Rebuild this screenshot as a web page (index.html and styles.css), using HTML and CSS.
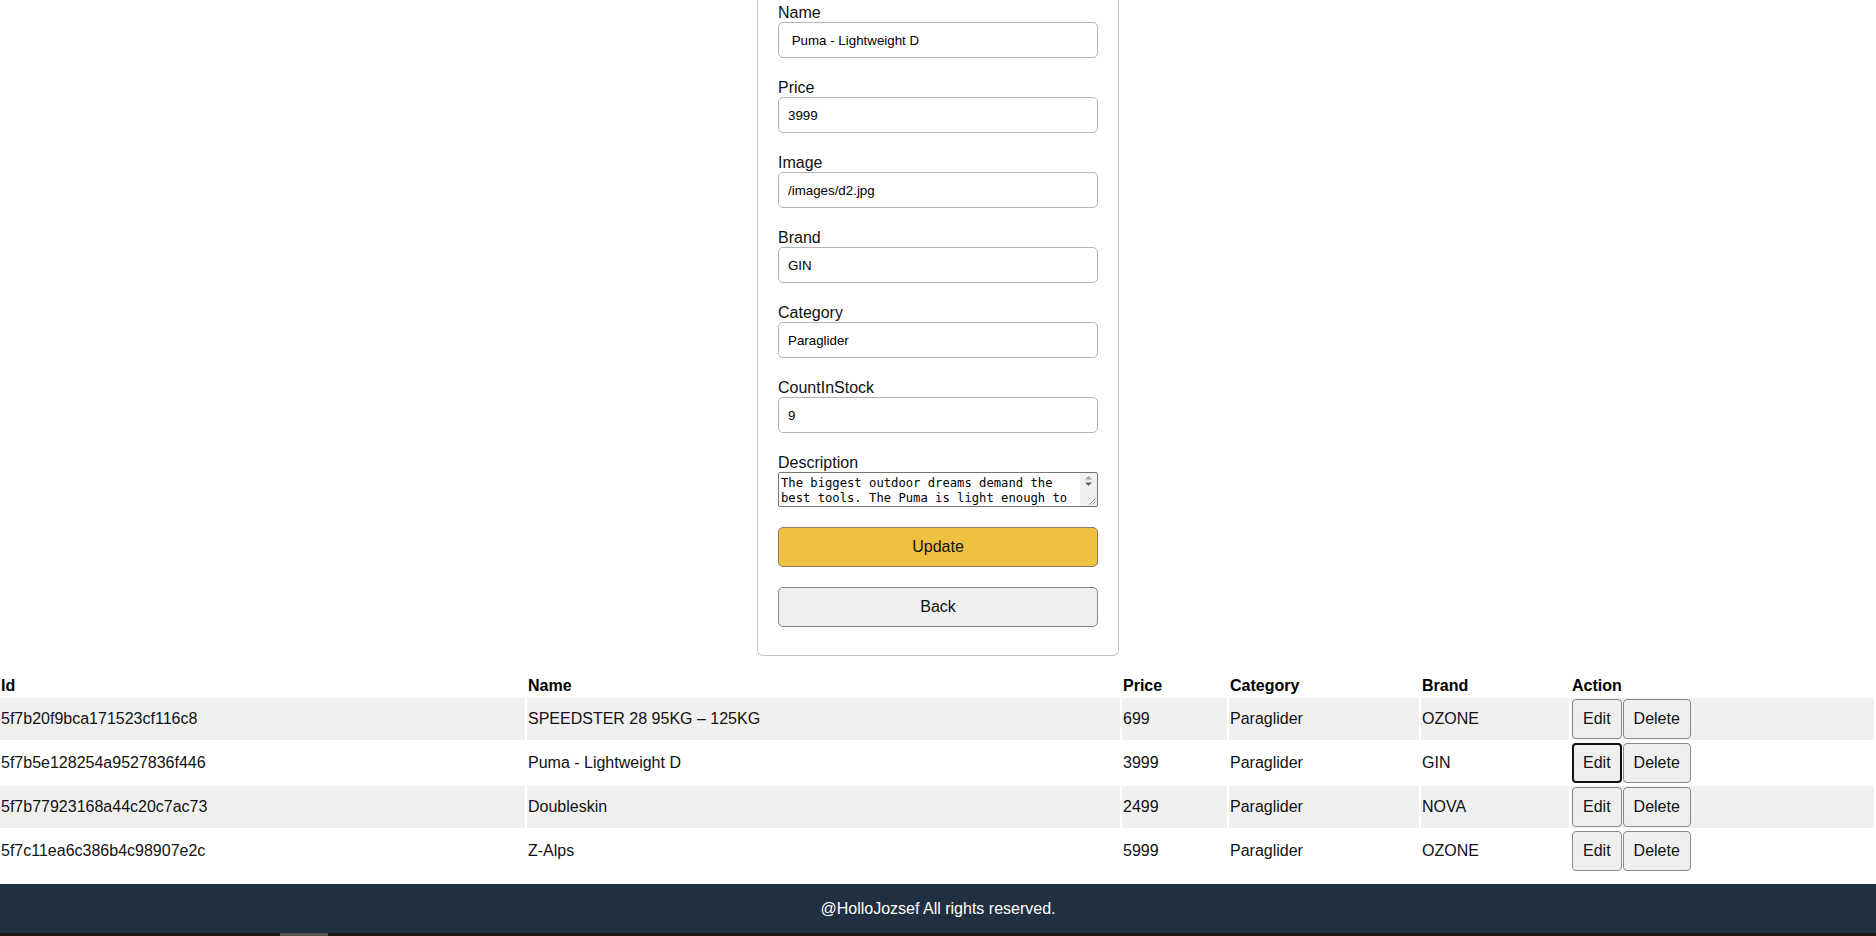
FILE: index.html
```html
<!DOCTYPE html>
<html lang="en">
<head>
<meta charset="utf-8">
<title>Edit Product</title>
<link rel="stylesheet" href="styles.css">
</head>
<body>
<div class="page">
  <main class="main">
    <form class="card form">
      <div class="field">
        <label for="name">Name</label>
        <input id="name" type="text" value=" Puma - Lightweight D">
      </div>
      <div class="field">
        <label for="price">Price</label>
        <input id="price" type="text" value="3999">
      </div>
      <div class="field">
        <label for="image">Image</label>
        <input id="image" type="text" value="/images/d2.jpg">
      </div>
      <div class="field">
        <label for="brand">Brand</label>
        <input id="brand" type="text" value="GIN">
      </div>
      <div class="field">
        <label for="category">Category</label>
        <input id="category" type="text" value="Paraglider">
      </div>
      <div class="field">
        <label for="count">CountInStock</label>
        <input id="count" type="text" value="9">
      </div>
      <div class="field">
        <label for="desc">Description</label>
        <textarea id="desc">The biggest outdoor dreams demand the best tools. The Puma is light enough to take on every hike and fly adventure, while still delivering the performance and safety you expect from a modern high-end wing.</textarea>
      </div>
      <button type="button" class="btn primary">Update</button>
      <button type="button" class="btn">Back</button>
    </form>

    <table class="table">
      <thead>
        <tr>
          <th class="c-id">Id</th>
          <th class="c-name">Name</th>
          <th class="c-price">Price</th>
          <th class="c-cat">Category</th>
          <th class="c-brand">Brand</th>
          <th class="c-act">Action</th>
        </tr>
      </thead>
      <tbody>
        <tr>
          <td>5f7b20f9bca171523cf116c8</td>
          <td>SPEEDSTER 28 95KG – 125KG</td>
          <td>699</td>
          <td>Paraglider</td>
          <td>OZONE</td>
          <td class="actions"><button type="button" class="small">Edit</button><button type="button" class="small">Delete</button></td>
        </tr>
        <tr>
          <td>5f7b5e128254a9527836f446</td>
          <td>Puma - Lightweight D</td>
          <td>3999</td>
          <td>Paraglider</td>
          <td>GIN</td>
          <td class="actions"><button type="button" class="small focused">Edit</button><button type="button" class="small">Delete</button></td>
        </tr>
        <tr>
          <td>5f7b77923168a44c20c7ac73</td>
          <td>Doubleskin</td>
          <td>2499</td>
          <td>Paraglider</td>
          <td>NOVA</td>
          <td class="actions"><button type="button" class="small">Edit</button><button type="button" class="small">Delete</button></td>
        </tr>
        <tr>
          <td>5f7c11ea6c386b4c98907e2c</td>
          <td>Z-Alps</td>
          <td>5999</td>
          <td>Paraglider</td>
          <td>OZONE</td>
          <td class="actions"><button type="button" class="small">Edit</button><button type="button" class="small">Delete</button></td>
        </tr>
      </tbody>
    </table>
  </main>

  <footer class="footer">@HolloJozsef All rights reserved.</footer>
  <div class="strip"><div class="strip-thumb"></div></div>
</div>
</body>
</html>
```

FILE: styles.css
```css
html, body {
  margin: 0;
  padding: 0;
  background: #ffffff;
}

body {
  font-family: "Liberation Sans", Arial, sans-serif;
  font-size: 16px;
  color: #000;
  overflow: hidden;
}

.page {
  display: flex;
  flex-direction: column;
  height: 936px;
}

.main {
  display: flex;
  flex-direction: column;
}

/* ---------- form card ---------- */
.card {
  box-sizing: border-box;
  width: 362px;
  margin: 0 auto;
  border: 1px solid #c4c4c4;
  border-top: none;
  border-radius: 0 0 6px 6px;
  background: #ffffff;
  padding: 3px 20px 28px 20px;
  display: flex;
  flex-direction: column;
}

.field {
  display: flex;
  flex-direction: column;
  margin-bottom: 20px;
}

.field label {
  font-size: 16px;
  line-height: 19px;
  color: #111;
}

.field input {
  box-sizing: border-box;
  height: 36px;
  width: 320px;
  margin: 0;
  padding: 0 9px;
  border: 1px solid #b4b4b4;
  border-radius: 5px;
  font-family: "Liberation Sans", Arial, sans-serif;
  font-size: 13.333px;
  color: #000;
  background: #fff;
  outline: none;
}

/* textarea with a drawn classic scrollbar at its right edge */
.field textarea {
  box-sizing: border-box;
  height: 35px;
  width: 320px;
  margin: 0;
  padding: 3px 19px 2px 2px;
  border: 1px solid #767676;
  border-radius: 2px;
  font-family: "DejaVu Sans Mono", "Liberation Mono", monospace;
  font-size: 12.2px;
  line-height: 14.7px;
  color: #000;
  resize: none;
  overflow: hidden;
  outline: none;
  background: #ffffff url("data:image/svg+xml;utf8,<svg xmlns='http://www.w3.org/2000/svg' width='17' height='33'><rect width='17' height='33' fill='%23f0f0f0'/><path d='M5 6.5 L8.5 3 L12 6.5Z' fill='%23a3a3a3'/><path d='M5 9.5 L8.5 13 L12 9.5Z' fill='%23606060'/><path d='M15.5 25.5 L9.5 31.5 M15.5 28.5 L12.5 31.5' stroke='%23909090' stroke-width='1'/></svg>") no-repeat right top;
  background-size: 17px 100%;
}

.btn {
  box-sizing: border-box;
  height: 40px;
  width: 320px;
  margin: 0 0 20px 0;
  padding: 0;
  border: 1px solid #858585;
  border-radius: 5px;
  background: #efefef;
  font-family: "Liberation Sans", Arial, sans-serif;
  font-size: 16px;
  color: #111;
}

.btn:last-child {
  margin-bottom: 0;
}

.btn.primary {
  background: #f0c040;
  border-color: #8d8062;
}

/* ---------- table ---------- */
.table {
  table-layout: fixed;
  width: calc(100% + 2px);
  margin: 18px 0 0 -2px;
  border-spacing: 2px;
  font-size: 16px;
}

.table th,
.table td {
  box-sizing: border-box;
  padding: 1px;
  text-align: left;
  line-height: 18px;
  white-space: nowrap;
}

.table th {
  font-weight: bold;
}

.table td {
  height: 42px;
  color: #111;
}

.table tbody tr:nth-child(odd) td {
  background: #f0f0f0;
}

.c-id { width: 525px; }
.c-name { width: 593px; }
.c-price { width: 105px; }
.c-cat { width: 190px; }
.c-brand { width: 148px; }
.c-act { width: 303px; }

.actions {
  font-size: 0;
}

.small {
  box-sizing: border-box;
  height: 40px;
  margin: 0 1px 0 0;
  padding: 0 10px;
  border: 1px solid #8a8a8a;
  border-radius: 4px;
  background: #efefef;
  font-family: "Liberation Sans", Arial, sans-serif;
  font-size: 16px;
  color: #111;
  vertical-align: middle;
}

.small.focused {
  border: 2px solid #111;
  padding: 0 9px;
}

/* ---------- footer ---------- */
.footer {
  margin-top: 10px;
  height: 49px;
  background: #203040;
  color: #ffffff;
  font-size: 16px;
  display: flex;
  align-items: center;
  justify-content: center;
}

.strip {
  height: 3px;
  background: #1c1b19;
  display: flex;
}

.strip-thumb {
  margin-left: 280px;
  width: 48px;
  height: 3px;
  background: #555555;
}
```
